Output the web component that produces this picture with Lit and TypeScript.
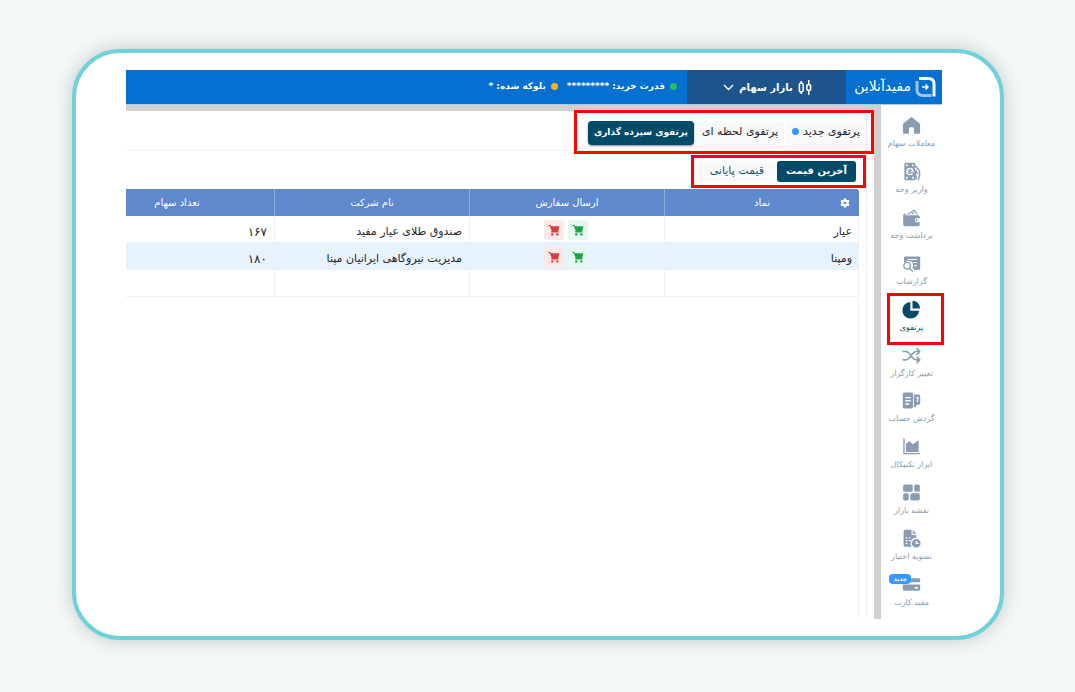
import { LitElement, html, css, svg, nothing } from "lit";
import { customElement, property, state } from "lit/decorators.js";
import { classMap } from "lit/directives/class-map.js";

const icons: Record<string, unknown> = {
  home: svg`<path d="M12 1.600c-.5 0-.9.2-1.300.5L2 9.300c-.5.4-.8 1-.8 1.700v9.700c0 1 .8 1.700 1.700 1.700h4.800c.7 0 1.100-.4 1.100-1.100v-4.500c0-1.700 1.200-2.800 3.200-2.800s3.200 1.100 3.200 2.800v4.500c0 .7.400 1.100 1.100 1.100h4.800c1 0 1.700-.8 1.700-1.700v-9.700c0-.7-.3-1.300-.8-1.700l-8.700-7.200c-.4-.3-.8-.5-1.300-.5z"/>`,
  deposit: svg`<path fill-rule="evenodd" d="M5 1h10a2 2 0 0 1 2 2v3.500l-1.500 1.500 2.500 5-1 8a2 2 0 0 1-2 2H5a2 2 0 0 1-2-2V3a2 2 0 0 1 2-2zm.2 2v2.400h2V3zm7.600 0v2.400h2V3zM5.200 18.600V21h2v-2.400zm7.600 0V21h2v-2.400zM10 7.200a4.800 4.800 0 1 0 0 9.600 4.800 4.800 0 0 0 0-9.600z"/><path fill="none" stroke="currentColor" stroke-width="1.800" stroke-linecap="round" d="M11.600 10.500c-1-1-3-.8-3 .5.1 1.500 3 1 3 2.500.1 1.100-2.200 1.400-3.300.4M17 5.500l4 4.200c.8.800 1.200 1.700 1.200 2.800V17l-1.700 5.500M15.500 9l4.200 5.500M13.500 13.500l4 3.500.3 4.500"/>`,
  wallet: svg`<path fill-rule="evenodd" d="M3.500 9H20.500A2 2 0 0 1 22.500 11v2h-4a2.500 2.500 0 0 0 0 5h4v2.500a2.500 2.500 0 0 1-2.500 2.500H4A2.500 2.500 0 0 1 1.500 20.500V9.500C1.500 8 2.500 7 4 7H6V8.200H3.500zM18.300 14.300a1.200 1.200 0 1 1 0 2.400 1.200 1.200 0 0 1 0-2.400z"/><path fill="none" stroke="currentColor" stroke-width="1.500" stroke-linejoin="round" d="M7.500 8L15.500 2.500l4 5.500M12.500 7.500l3-2"/>`,
  reports: svg`<path fill-rule="evenodd" d="M3.500 3h18A1.500 1.500 0 0 1 23 4.500v14a1.500 1.500 0 0 1-1.500 1.500H15l-2-2.500c3.200-5-1-10.500-6.500-8.800-1.500.5-2.900 1.400-4 2.500V4.500A1.500 1.500 0 0 1 3.500 3zM7 6.200v1.300h12V6.200zm7 4v1.300h5v-1.300zm1.200 4v1.300H19v-1.300z"/><path fill="none" stroke="currentColor" stroke-width="1.700" stroke-linecap="round" d="M6.500 10.500a4.200 4.200 0 1 0 0 8.400 4.200 4.200 0 0 0 0-8.400M9.500 18l3.700 3.500"/>`,
  pie: svg`<path d="M10.500 2.500v11h11a10.500 10.500 0 1 1-11-11z"/><path d="M13.300 1a9.700 9.700 0 0 1 9.700 9.700h-9.700z"/>`,
  shuffle: svg`<path fill="none" stroke="currentColor" stroke-width="2" stroke-linecap="round" stroke-linejoin="round" d="M1.500 7H5c5.500 0 7 10.500 13 10.500h4M1.500 17.500H5c5.500 0 7-10.500 13-10.500h4M19 3.500L22.500 7 19 10.500M19 14l3.500 3.500L19 21"/>`,
  ledger: svg`<path fill-rule="evenodd" d="M3 2h9a2 2 0 0 1 2 2v16a2 2 0 0 1-2 2H3a2 2 0 0 1-2-2V4a2 2 0 0 1 2-2zm1 5.500v1.800h7V7.500zm0 4v1.800h7v-1.800zm0 4v1.800h5v-1.800z"/><path fill-rule="evenodd" d="M15 4.500h6a2 2 0 0 1 2 2v9a2 2 0 0 1-2 2h-2l-2 3h-2zm3 3v1.500h1.500l-.8 5h1.500l1-6.500z"/>`,
  chart: svg`<path fill="none" stroke="currentColor" stroke-width="1.700" stroke-linecap="round" d="M2.500 2.500V21H22"/><path d="M5 18.800V8.500l4.200-3.500 4.300 4L21 4v14.800z"/>`,
  map: svg`<rect x="1.500" y="2" width="12" height="9" rx="2"/><rect x="15.500" y="2" width="7" height="9" rx="2"/><rect x="1.500" y="13" width="7" height="9" rx="2"/><rect x="10.500" y="13" width="12" height="9" rx="2"/>`,
  settle: svg`<path fill-rule="evenodd" d="M4 1h8v6.500h6v3.700a6.800 6.800 0 0 0-5.500 11.300H4a2 2 0 0 1-2-2V3a2 2 0 0 1 2-2zm.8 9.500V12h2v-1.500zm4 0V12h2v-1.500zm-4 3.500v1.500h2V14zm4 0v1.500h2V14zm-4 3.500V19h2v-1.500z"/><path d="M13.500 1.300L18.200 6h-4.700z"/><path fill-rule="evenodd" d="M18 12.500a5.500 5.500 0 1 1 0 11 5.500 5.500 0 0 1 0-11zm-.8 2.200v4.200h4v-1.500h-2.500v-2.700z"/>`,
  card: svg`<path fill-rule="evenodd" d="M3 4h18a2 2 0 0 1 2 2v3H1V6a2 2 0 0 1 2-2zM1 12h22v6a2 2 0 0 1-2 2H3a2 2 0 0 1-2-2zm15 3v2h4v-2z"/>`,
  cart: svg`<path d="M1 2h4l1.500 2.500H22.500l-1.800 10H7.500L3.800 4H1z"/><path d="M6.500 14h14v3h-14z"/><circle cx="8.500" cy="20.800" r="2.400"/><circle cx="18.500" cy="20.800" r="2.400"/>`,
  gear: svg`<path fill-rule="evenodd" d="M9.500 1h5l.8 3.200 1.800 1.100 3.200-1 2.500 4.200-2.500 2.100v2.800l2.500 2.100-2.500 4.200-3.200-1-1.800 1.100-.8 3.200h-5l-.8-3.200-1.800-1.100-3.200 1-2.500-4.200 2.500-2.100v-2.800L1.200 8.500l2.500-4.200 3.200 1 1.800-1.100zM12 8.800a3.200 3.200 0 1 0 0 6.400 3.200 3.200 0 0 0 0-6.400z"/>`,
};

const icon = (name: string) =>
  html`<svg class="icon" viewBox="0 0 24 24" fill="currentColor" aria-hidden="true">${icons[name]}</svg>`;

@customElement("side-nav")
class SideNav extends LitElement {
  @property() current = "pie";

  static styles = css`
    :host { display: flex; }
    .nav { display: flex; flex: 1; flex-direction: column; padding: 8px 0 1px; }
    .item {
      position: relative; flex: 1; display: flex; flex-direction: column; align-items: center;
      gap: 1px; padding-top: 3px; box-sizing: border-box; color: #8b9bb2; text-decoration: none;
      font-size: 8px; line-height: 16px; white-space: nowrap;
    }
    .active { color: #014a68; }
    .icon { width: 19px; height: 19px; flex: none; }
    .badge {
      position: absolute; top: 2px; right: 31px; padding: 0 4px; border-radius: 4px;
      background: #3399ff; color: #fff; font-size: 6px; font-weight: bold; line-height: 10px;
    }
    .mark { position: absolute; inset: -4px -2px -2px 6px; border: 3px solid #f00; }
  `;

  private items = [
    ["home", "معاملات سهام"], ["deposit", "واریز وجه"], ["wallet", "برداشت وجه"],
    ["reports", "گزارشات"], ["pie", "پرتفوی"], ["shuffle", "تغییر کارگزار"],
    ["ledger", "گردش حساب"], ["chart", "ابزار تکنیکال"], ["map", "نقشه بازار"],
    ["settle", "تسویه اختیار"], ["card", "مفید کارت"],
  ];

  render() {
    return html`<nav class="nav">
      ${this.items.map(([id, label]) => html`
        <a href="#${id}" class=${classMap({ item: true, active: id === this.current })}>
          ${icon(id)}<span>${label}</span>
          ${id === "card" ? html`<span class="badge">جدید</span>` : nothing}
          ${id === this.current ? html`<span class="mark"></span>` : nothing}
        </a>`)}
    </nav>`;
  }
}

@customElement("holdings-table")
class HoldingsTable extends LitElement {
  static styles = css`
    :host { display: block; overflow: hidden; border-top-right-radius: 3px; }
    .table { width: 780px; table-layout: fixed; border-collapse: separate; border-spacing: 0; }
    .head {
      height: 27px; padding: 0; background: #5f88cd; color: #fff; font-size: 10px; font-weight: normal;
      line-height: 20px; border-left: 1px solid #8fabdc; box-sizing: border-box;
    }
    .split { display: grid; grid-template-columns: 1fr auto 1fr; align-items: center; }
    .settings {
      justify-self: start; display: flex; margin-right: 9px; padding: 0; border: 0;
      background: none; color: #fff; cursor: pointer;
    }
    .settings .icon { width: 10px; height: 10px; }
    .cell {
      height: 27px; padding: 5px 7px 0; box-sizing: border-box; color: #22262b;
      font-size: 11px; line-height: 20px; text-align: right; white-space: nowrap;
      border-left: 1px solid #edf1f5; border-bottom: 1px solid #edf1f5;
    }
    .alt .cell { background: #e8f2fd; }
    .actions { display: flex; justify-content: center; gap: 4px; }
    .cell.tools { padding: 2px 2px 0 0; }
    .trade {
      display: flex; align-items: center; justify-content: center; width: 20px; height: 20px;
      padding: 0; border: 0; border-radius: 3px; cursor: pointer;
    }
    .trade .icon { width: 12px; height: 12px; }
    .buy { background: #e5f8ef; color: #1fa34a; }
    .sell { background: #fbe9ea; color: #dc3c40; }
    .num { font-size: 12px; }
  `;

  private rows = [
    ["عیار", "صندوق طلای عیار مفید", "۱۶۷"],
    ["ومپنا", "مدیریت نیروگاهی ایرانیان مپنا", "۱۸۰"],
  ];

  render() {
    return html`<table class="table">
      <thead><tr>
        <th class="head" scope="col"><div class="split">
          <button class="settings" aria-label="تنظیمات">${icon("gear")}</button><span>نماد</span>
        </div></th>
        <th class="head" scope="col">ارسال سفارش</th>
        <th class="head" scope="col">نام شرکت</th>
        <th class="head" scope="col">تعداد سهام</th>
      </tr></thead>
      <tbody>
        ${this.rows.map(([symbol, company, count], i) => html`
          <tr class=${classMap({ alt: i % 2 === 1 })}>
            <td class="cell">${symbol}</td>
            <td class="cell tools"><div class="actions">
              <button class="trade buy" aria-label="خرید">${icon("cart")}</button>
              <button class="trade sell" aria-label="فروش">${icon("cart")}</button>
            </div></td>
            <td class="cell">${company}</td>
            <td class="cell num">${count}</td>
          </tr>`)}
        <tr><td class="cell"></td><td class="cell"></td><td class="cell"></td><td class="cell"></td></tr>
      </tbody>
    </table>`;
  }
}

@customElement("app-root")
class AppRoot extends LitElement {
  @state() private tab = 2;
  @state() private price = 0;

  static styles = css`
    :host {
      display: flex; box-sizing: border-box; min-height: 100vh; padding: 49px 71px 52px 72px;
      background: #f3f9f8; font-family: "DejaVu Sans", sans-serif; direction: rtl;
    }
    button { font-family: inherit; }
    .frame {
      flex: 1; display: flex; min-width: 0; padding: 17px 58px 17px 50px;
      border: 4px solid #70d2d8; border-radius: 48px; background: #fff;
      box-shadow: 0 0 20px rgba(0, 0, 0, 0.2);
    }
    .app { flex: 1; display: flex; flex-direction: column; min-width: 0; }
    .top { display: flex; height: 34px; background: #0570d0; color: #fff; border-bottom: 1px solid #a9c9e6; }
    .brand {
      display: flex; align-items: center; gap: 4px; width: 90px; padding-right: 6px;
      color: #fff; text-decoration: none; font-size: 14px; line-height: 20px; white-space: nowrap;
    }
    .brand-name { padding-bottom: 2px; }
    .logo { width: 21px; height: 22px; flex: none; }
    .market {
      display: flex; align-items: center; justify-content: center; gap: 5px; width: 159px;
      padding: 0 0 0 2px; border: 0; background: #1d548d; color: #fff; font-size: 10px; font-weight: bold;
      white-space: nowrap; cursor: pointer;
    }
    .candles { width: 14px; height: 15px; }
    .chevron { width: 11px; height: 7px; }
    .status {
      display: flex; align-items: center; gap: 9px; padding: 0 10px 2px 0;
      font-size: 9px; font-weight: bold; white-space: nowrap;
    }
    .stat { display: flex; align-items: center; gap: 5px; }
    .dot { width: 7px; height: 7px; border-radius: 50%; }
    .green { background: #26c165; }
    .amber { background: #ffb01f; }
    .blue { background: #3399ff; }
    .body { flex: 1; display: flex; min-height: 0; }
    .side { width: 61px; }
    .main {
      flex: 1; min-width: 0; display: flex; flex-direction: column;
      border-top: 6px solid #d0d0d0; border-right: 7px solid #d0d0d0;
    }
    .panel {
      flex: 1; display: flex; flex-direction: column; margin-right: 7px; border-right: 1px solid #eef1f4;
    }
    .tabs {
      display: flex; align-items: center; box-sizing: border-box; height: 40px;
      padding-top: 4px; border-bottom: 1px solid #eff1f3;
    }
    .group { position: relative; display: flex; align-items: center; gap: 2px; }
    .chip {
      display: flex; align-items: center; gap: 4px; height: 24px; padding: 0 6px 2px; border: 0;
      border-radius: 4px; background: #f8f9fb; color: #1f2327; font-size: 11px;
      white-space: nowrap; cursor: pointer;
    }
    .chip.on {
      background: #014a68; color: #fff; font-size: 9px; font-weight: bold;
      box-shadow: 0 1px 2px rgba(1, 74, 104, 0.6);
    }
    .mark { position: absolute; border: 3px solid #f00; pointer-events: none; }
    .around-tabs { inset: -11px -8px -9px -14px; }
    .around-prices { inset: -6px -8px -6px -6px; }
    .prices { display: flex; padding: 10px 8px 7px 0; }
    .segment { position: relative; display: flex; background: #f8f9fb; border-radius: 4px; padding-right: 2px; }
    .seg {
      height: 21px; padding: 0 13px 1px; border: 0; border-radius: 3px; background: none;
      color: #185269; font-size: 11px; line-height: 20px; white-space: nowrap; cursor: pointer;
    }
    .seg.on { padding: 0 9px 1px; background: #014a68; color: #fff; font-size: 10px; font-weight: bold; }
    .data { flex: 1; margin-right: 7px; border-right: 1px solid #eef1f4; }
    .holdings { margin-right: -1px; }
  `;

  render() {
    const tabs = ["پرتفوی جدید", "پرتفوی لحظه ای", "پرتفوی سپرده گذاری"];
    const prices = ["آخرین قیمت", "قیمت پایانی"];
    return html`<div class="frame"><div class="app">
      <header class="top">
        <a class="brand" href="#home">
          <svg class="logo" viewBox="0 0 21 22" fill="none" stroke-linecap="butt" aria-hidden="true">
            <path stroke="#fff" stroke-width="3" d="M4 2.500h9.500c3.500 0 5.500 2 5.500 5.500v12.500"/>
            <path stroke="#9cc4ec" stroke-width="3" d="M2 5v8.500C2 17.500 4 19.500 8 19.500h8.500"/>
            <path stroke="#fff" stroke-width="1.500" d="M7 11h6M10.500 8.500l2.500 2.500-2.500 2.500"/>
          </svg>
          <span class="brand-name">مفیدآنلاین</span>
        </a>
        <button class="market">
          <svg class="candles" viewBox="0 0 15 16" fill="none" stroke="#fff" stroke-width="1.700" aria-hidden="true">
            <rect x="1.500" y="3.500" width="4" height="9" rx="1"/><path d="M3.500 1v2.500M3.500 12.500V15M11.500 0v5M11.500 11v5"/>
            <rect x="9.500" y="5" width="4" height="6" rx="1"/>
          </svg>
          <span>بازار سهام</span>
          <svg class="chevron" viewBox="0 0 11 7" fill="none" stroke="#fff" stroke-width="1.300" aria-hidden="true"><path d="M1 1l4.500 4.500L10 1"/></svg>
        </button>
        <div class="status">
          <span class="stat"><span class="dot green"></span>قدرت خرید: *********</span>
          <span class="stat"><span class="dot amber"></span>بلوکه شده: *</span>
        </div>
      </header>
      <div class="body">
        <side-nav class="side"></side-nav>
        <main class="main"><div class="panel">
          <div class="tabs"><div class="group">
            ${tabs.map((label, i) => html`
              <button class=${classMap({ chip: true, on: i === this.tab })} @click=${() => (this.tab = i)}>
                ${label}${i === 0 ? html`<span class="dot blue"></span>` : nothing}
              </button>`)}
            <span class="mark around-tabs"></span>
          </div></div>
          <div class="prices"><div class="segment">
            ${prices.map((label, i) => html`
              <button class=${classMap({ seg: true, on: i === this.price })} @click=${() => (this.price = i)}>${label}</button>`)}
            <span class="mark around-prices"></span>
          </div></div>
          <div class="data"><holdings-table class="holdings"></holdings-table></div>
        </div></main>
      </div>
    </div></div>`;
  }
}
